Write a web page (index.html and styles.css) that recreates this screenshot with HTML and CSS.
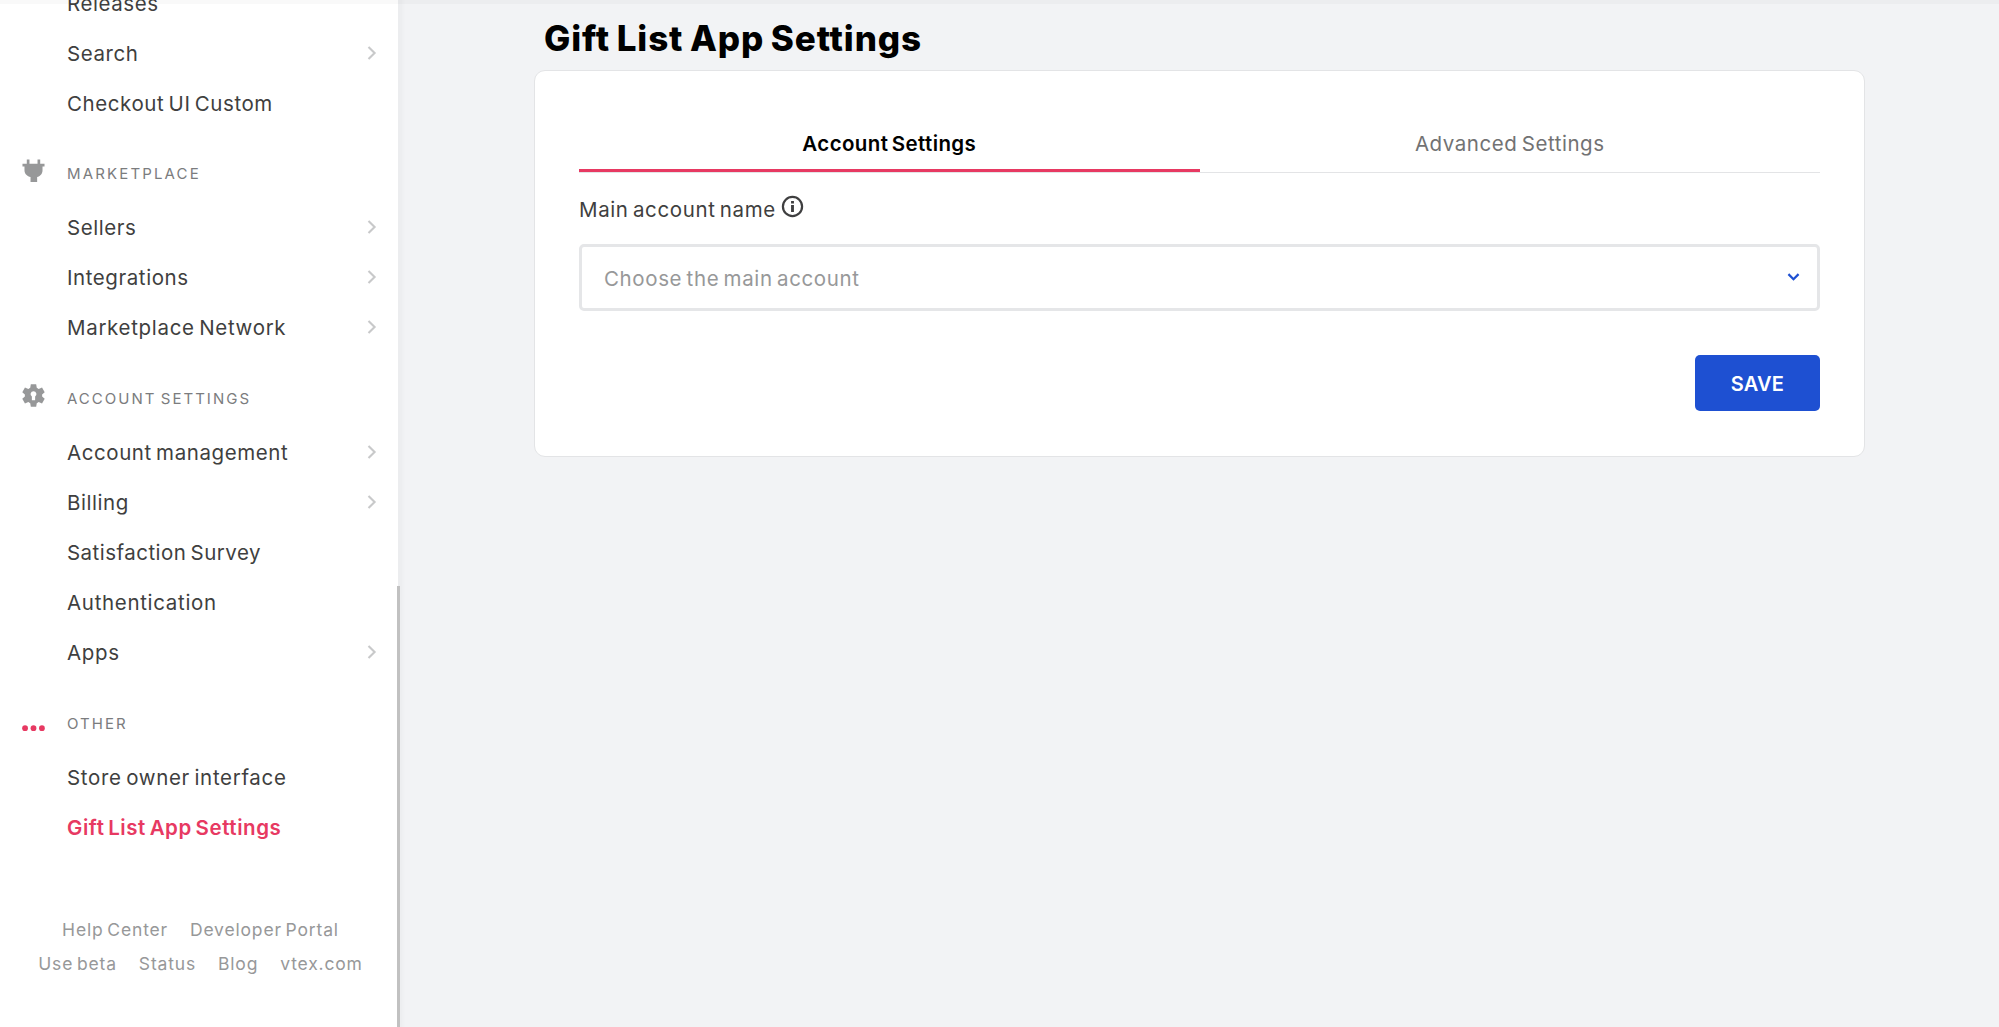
FILE: index.html
```html
<!DOCTYPE html>
<html lang="en">
<head>
<meta charset="utf-8">
<title>Gift List App Settings</title>
<link rel="stylesheet" href="styles.css">
</head>
<body>
<svg class="defs" aria-hidden="true">
  <symbol id="chevron" viewBox="0 0 10 16"><path d="M1.5 2 7.6 8 1.5 14" fill="none" stroke="currentColor" stroke-width="2.1"/></symbol>
</svg>
<div class="app">
  <aside class="sidebar">
    <nav class="nav">
      <a class="item">Releases</a>
      <a class="item">Search<svg class="chev"><use href="#chevron"/></svg></a>
      <a class="item">Checkout UI Custom</a>

      <h2 class="group first">
        <svg class="group-icon plug" viewBox="0 0 24 24"><path d="M5 .5h2.800v4.500h8.400V.5H19V5h4.500v2.800H21.400V12c0 3.600-2.600 6-5.600 6.800V24H8.900v-5.200C5.600 18 2.600 15.600 2.600 12V7.800H.5V5H5z"/></svg>
        <span class="wide">Marketplace</span>
      </h2>
      <a class="item">Sellers<svg class="chev"><use href="#chevron"/></svg></a>
      <a class="item">Integrations<svg class="chev"><use href="#chevron"/></svg></a>
      <a class="item loose">Marketplace Network<svg class="chev"><use href="#chevron"/></svg></a>

      <h2 class="group">
        <svg class="group-icon gear" viewBox="0 0 24 24"><path fill-rule="evenodd" d="M9.200.3h5.600l.6 3.700 2 1.200 3.500-1.500 2.800 4.800-2.700 2.400v2.200l2.700 2.400-2.800 4.800-3.500-1.500-2 1.200-.6 3.700H9.200l-.6-3.700-2-1.200-3.500 1.500L.3 15.500 3 13.100v-2.200L.3 8.500l2.800-4.800 3.500 1.500 2-1.200zM12 7.500a3 3 0 0 0-1.700 5.500V17h3.400v-4A3 3 0 0 0 12 7.500z"/></svg>
        <span>Account Settings</span>
      </h2>
      <a class="item">Account management<svg class="chev"><use href="#chevron"/></svg></a>
      <a class="item">Billing<svg class="chev"><use href="#chevron"/></svg></a>
      <a class="item snug">Satisfaction Survey</a>
      <a class="item loose">Authentication</a>
      <a class="item loose">Apps<svg class="chev"><use href="#chevron"/></svg></a>

      <h2 class="group">
        <svg class="group-icon dots" viewBox="0 0 24 24"><circle cx="3.200" cy="14.800" r="3"/><circle cx="12" cy="14.800" r="3"/><circle cx="20.800" cy="14.800" r="3"/></svg>
        <span>Other</span>
      </h2>
      <a class="item loose">Store owner interface</a>
      <a class="item active">Gift List App Settings</a>
    </nav>
    <footer class="links">
      <div class="links-row"><a>Help Center</a><a>Developer Portal</a></div>
      <div class="links-row"><a>Use beta</a><a>Status</a><a>Blog</a><a>vtex.com</a></div>
    </footer>
    <div class="scroll-thumb"></div>
  </aside>

  <main class="main">
    <h1 class="title">Gift List App Settings</h1>
    <section class="card">
      <div class="tabs">
        <button class="tab selected">Account Settings</button>
        <button class="tab">Advanced Settings</button>
      </div>
      <div class="label">
        <span>Main account name</span>
        <svg class="info" viewBox="0 0 24 24"><circle cx="12" cy="12" r="10" fill="none" stroke="currentColor" stroke-width="2.300"/><path d="M10.500 6.300h3v2.500h-3zM10.500 10.500h3v7.300h-3z" fill="currentColor"/></svg>
      </div>
      <div class="select">
        <span>Choose the main account</span>
        <svg class="arrow" viewBox="0 0 14 9"><path d="M1.300 1.300 7 7l5.700-5.700" fill="none" stroke="currentColor" stroke-width="2.500"/></svg>
      </div>
      <div class="actions"><button class="save">SAVE</button></div>
    </section>
  </main>
  <div class="top-shadow"></div>
</div>
</body>
</html>
```
FILE: styles.css
```css
* { box-sizing: border-box; }

body {
  margin: 0;
  font-family: Inter, "Open Sans", sans-serif;
  font-size: 20.5px;
  letter-spacing: 0.62px;
  word-spacing: -2px;
  color: #3f3f40;
  background: #f2f3f5;
}

button {
  font: inherit;
  letter-spacing: inherit;
  word-spacing: inherit;
  border: 0;
  background: none;
  padding: 0;
}

.defs { display: none; }

.app {
  position: relative;
  display: flex;
  height: 1027px;
  overflow: hidden;
}

.top-shadow {
  position: absolute;
  inset: 0 0 auto;
  height: 4px;
  background: rgba(0, 0, 0, 0.022);
}

/* Sidebar */
.sidebar {
  position: relative;
  flex: none;
  width: 398px;
  height: 1027px;
  background: #fff;
  box-shadow: 0 0 3px 5px rgba(0, 0, 0, 0.025);
}

.scroll-thumb {
  position: absolute;
  right: -2px;
  top: 586px;
  bottom: 0;
  width: 3px;
  background: #c1c1c1;
}

.nav { margin-top: -22px; }

.item {
  display: flex;
  align-items: center;
  justify-content: space-between;
  height: 50px;
  padding: 0 21px 0 67px;
  letter-spacing: 0.57px;
}

.snug { letter-spacing: 0.47px; }
.loose { letter-spacing: 0.68px; }

.active {
  color: #e73962;
  font-weight: 600;
}

.chev {
  width: 10px;
  height: 16px;
  margin-top: -1px;
  color: #c8c9ca;
}

.group {
  display: flex;
  align-items: center;
  gap: 22px;
  height: 75px;
  margin: 0;
  padding: 17px 0 0 22px;
  font-size: 15px;
  font-weight: 400;
  letter-spacing: 2.02px;
  text-transform: uppercase;
  color: #7b7c7e;
}

.wide { letter-spacing: 2.15px; }

.group.first { height: 74px; }

.group-icon {
  width: 23px;
  height: 23px;
  margin-top: -6px;
  fill: #979899;
}

.dots {
  margin-top: 5px;
  fill: #e73962;
}

.links {
  display: grid;
  padding: 61px 0 0 3px;
  font-size: 17.5px;
  letter-spacing: 0.83px;
  color: #979899;
}

.links-row {
  display: flex;
  justify-content: center;
  gap: 22px;
  height: 33.5px;
  line-height: 33px;
}

/* Settings page */
.main { padding: 12px 0 0 136px; }

.title {
  height: 58px;
  margin: 0;
  padding-left: 10px;
  font-size: 35px;
  line-height: 53px;
  font-weight: 800;
  letter-spacing: 0.9px;
  word-spacing: -2px;
  color: #000;
}

.card {
  width: 1331px;
  height: 387px;
  padding: 44px;
  border: 1px solid #e3e4e6;
  border-radius: 11px;
  background: #fff;
}

.tabs {
  display: flex;
  height: 58px;
  border-bottom: 1.5px solid #e3e4e6;
}

.tab {
  flex: 1;
  padding-bottom: 1px;
  letter-spacing: 0.55px;
  color: #727273;
}

.selected {
  padding-top: 2px;
  padding-bottom: 0;
  border-bottom: 3px solid #e73962;
  font-weight: 600;
  letter-spacing: 0.38px;
  color: #000;
}

.label {
  display: flex;
  align-items: center;
  gap: 5px;
  height: 71px;
  padding-top: 1px;
}

.info {
  width: 23px;
  height: 23px;
  margin-top: -6px;
}

.select {
  display: flex;
  align-items: center;
  justify-content: space-between;
  height: 67px;
  padding: 1px 17px 0 22px;
  border: 3px solid #e5e6e8;
  border-radius: 5px;
  color: #979899;
}

.arrow {
  width: 13px;
  height: 8px;
  margin-top: -2px;
  color: #1e50d2;
}

.actions {
  display: flex;
  justify-content: flex-end;
  padding-top: 44px;
}

.save {
  width: 125px;
  height: 56px;
  padding-top: 1px;
  border-radius: 5px;
  background: #1e50d2;
  color: #fff;
  font-size: 20px;
  font-weight: 600;
  letter-spacing: 0.2px;
}
```
